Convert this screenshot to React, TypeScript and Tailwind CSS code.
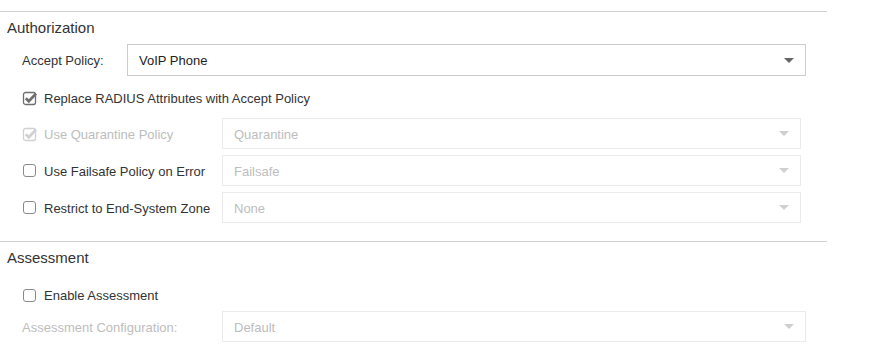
import React from "react";

function Arrow({ disabled }: { disabled?: boolean }) {
  return (
    <svg width="10" height="5" viewBox="0 0 10 5" className="shrink-0">
      <path d="M0 0 L10 0 L5 5 Z" fill={disabled ? "#cfcfcf" : "#666666"} />
    </svg>
  );
}

function CheckedBox({ disabled }: { disabled?: boolean }) {
  const c = disabled ? "#d0d0d0" : "#6e6e6e";
  return (
    <svg width="16" height="16" viewBox="0 0 16 16" className="shrink-0">
      <rect x="1.5" y="2.5" width="12" height="12" rx="2" fill="#ffffff" stroke={c} strokeWidth="1.3" />
      <path d="M3.8 8.2 L6.8 11.2 L14 3.6" fill="none" stroke={c} strokeWidth="2.8" strokeLinejoin="miter" />
    </svg>
  );
}

function EmptyBox() {
  return <div className="w-[13px] h-[13px] rounded-[3px] border border-[#8a8a8a] bg-white shrink-0" />;
}

function Select({ value, disabled, width }: { value: string; disabled?: boolean; width: string }) {
  return (
    <div
      className={`${width} h-[31px] flex items-center justify-between pl-[11px] pr-[11px] border bg-white ${
        disabled ? "border-[#ebebeb] text-[#bdbdbd]" : "border-[#cccccc] text-[#222222]"
      }`}
    >
      <span className="pt-[2px]">{value}</span>
      <Arrow disabled={disabled} />
    </div>
  );
}

function CheckRow({
  label,
  state,
  select,
}: {
  label: string;
  state: "checked" | "checkedDisabled" | "empty";
  select: string;
}) {
  const disabled = state === "checkedDisabled";
  return (
    <div className="flex items-center h-[31px]">
      <div className="w-[222px] flex items-center pl-[22px]">
        {state === "empty" ? (
          <div className="w-[16px] flex justify-start pl-[1px]">
            <EmptyBox />
          </div>
        ) : (
          <CheckedBox disabled={disabled} />
        )}
        <span className={`ml-[6px] pt-[2px] ${disabled ? "text-[#bdbdbd]" : "text-[#333333]"}`}>{label}</span>
      </div>
      <Select value={select} disabled width="w-[579px]" />
    </div>
  );
}

export default function App() {
  return (
    <div
      className="w-[873px] h-[345px] bg-white overflow-hidden text-[13px] text-[#333333]"
      style={{ fontFamily: '"Liberation Sans", Arial, sans-serif' }}
    >
      <div className="w-[827px] pt-[11px]">
        <div className="border-t border-[#d0d0d0]">
          <div className="h-[30px] flex items-center pl-[7px] pt-[2px] text-[15px] text-[#333333]">Authorization</div>
          <div className="mt-[2px] flex items-center h-[32px]">
            <div className="w-[127px] pl-[22px] pt-[1px]">Accept Policy:</div>
            <div className="w-[679px] h-[32px] flex items-center justify-between pl-[11px] pr-[11px] border border-[#cccccc] text-[#222222]">
              <span className="pt-[1px]">VoIP Phone</span>
              <Arrow />
            </div>
          </div>
          <div className="mt-[10px] h-[24px] flex items-center pl-[22px]">
            <CheckedBox />
            <span className="ml-[6px] pt-[1px]">Replace RADIUS Attributes with Accept Policy</span>
          </div>
          <div className="mt-[8px] flex flex-col gap-[6px]">
            <CheckRow label="Use Quarantine Policy" state="checkedDisabled" select="Quarantine" />
            <CheckRow label="Use Failsafe Policy on Error" state="empty" select="Failsafe" />
            <CheckRow label="Restrict to End-System Zone" state="empty" select="None" />
          </div>
        </div>
        <div className="mt-[18px] border-t border-[#d0d0d0]">
          <div className="h-[30px] flex items-center pl-[7px] pt-[2px] text-[15px] text-[#333333]">Assessment</div>
          <div className="mt-[11px] h-[24px] flex items-center pl-[22px]">
            <div className="w-[16px] flex justify-start pl-[1px]">
              <EmptyBox />
            </div>
            <span className="ml-[6px] pt-[1px]">Enable Assessment</span>
          </div>
          <div className="mt-[4px] flex items-center h-[31px]">
            <div className="w-[222px] pl-[22px] pt-[2px] text-[#bdbdbd]">Assessment Configuration:</div>
            <Select value="Default" disabled width="w-[584px]" />
          </div>
        </div>
      </div>
    </div>
  );
}
